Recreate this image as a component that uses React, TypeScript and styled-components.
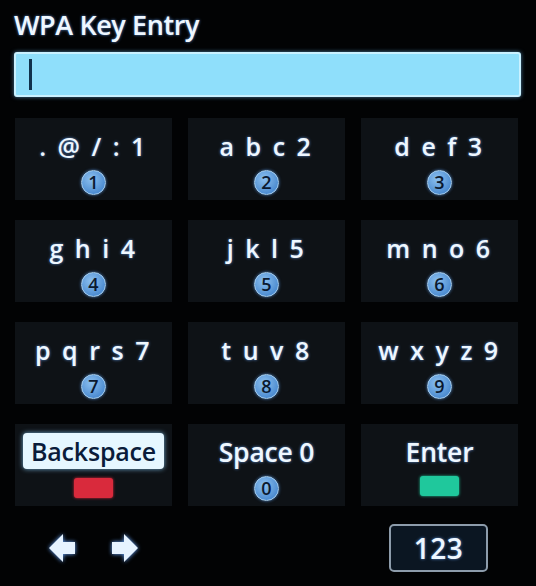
import React from "react";
import styled, { createGlobalStyle } from "styled-components";

const GlobalStyle = createGlobalStyle`
  html, body {
    margin: 0;
    padding: 0;
    background: #000;
  }
  body {
    font-family: "Open Sans", "DejaVu Sans", sans-serif;
  }
`;

const Screen = styled.div`
  width: 536px;
  height: 586px;
  box-sizing: border-box;
  padding: 8px 15px 0 14px;
  background: #020304;
  color: #eef7ff;
  overflow: hidden;
`;

const Title = styled.div`
  font-size: 27px;
  font-weight: 600;
  line-height: 33px;
  letter-spacing: -0.4px;
  text-shadow: 0 0 3px rgba(110, 170, 255, 0.8);
`;

const InputBar = styled.div`
  margin-top: 11px;
  height: 45px;
  box-sizing: border-box;
  background: #8fdffb;
  border: 2px solid #c9f1ff;
  border-radius: 3px;
  box-shadow: 0 0 4px rgba(120, 200, 255, 0.6);
  display: flex;
  align-items: center;
  padding-left: 13px;
`;

const Caret = styled.div`
  width: 3px;
  height: 31px;
  background: #10324c;
`;

const Keypad = styled.div`
  margin-top: 21px;
  margin-left: 1px;
  display: grid;
  grid-template-columns: repeat(3, 157px);
  grid-auto-rows: 82px;
  column-gap: 16px;
  row-gap: 20px;
`;

const Key = styled.div`
  background: #0e1216;
  display: flex;
  flex-direction: column;
  align-items: center;
  padding-top: 13px;
  box-sizing: border-box;
`;

const Label = styled.div<{ $word?: boolean; $selected?: boolean }>`
  font-size: ${(p) => (p.$word && !p.$selected ? "26.5px" : "25px")};
  font-weight: 600;
  line-height: 30px;
  letter-spacing: ${(p) => (p.$word ? "-0.2px" : "2.5px")};
  white-space: pre;
  color: ${(p) => (p.$selected ? "#0a1c3a" : "#eef7ff")};
  background: ${(p) => (p.$selected ? "#e6f7ff" : "transparent")};
  border-radius: ${(p) => (p.$selected ? "4px" : "0")};
  padding: ${(p) => (p.$selected ? "3px 8px" : "0")};
  margin-top: ${(p) => (p.$selected ? "-4px" : "0")};
  box-shadow: ${(p) => (p.$selected ? "0 0 5px rgba(140, 210, 255, 0.8)" : "none")};
  text-shadow: ${(p) => (p.$selected ? "none" : "0 0 3px rgba(110, 170, 255, 0.8)")};
`;

const Badge = styled.div`
  margin-top: 9px;
  width: 25px;
  height: 25px;
  border-radius: 50%;
  box-sizing: border-box;
  background: radial-gradient(circle at 40% 35%, #8cc0ef 0%, #4f8ed2 70%, #3f7cc0 100%);
  border: 1.5px solid #a9d2f4;
  color: #0b1a30;
  font-size: 18px;
  font-weight: 600;
  line-height: 22px;
  text-align: center;
  box-shadow: 0 0 3px rgba(100, 170, 255, 0.7);
`;

const ColorKey = styled.div<{ $color: string }>`
  margin-top: 9px;
  width: 39px;
  height: 20px;
  border-radius: 3px;
  background: ${(p) => p.$color};
  box-shadow: 0 0 3px ${(p) => p.$color};
`;

const Footer = styled.div`
  margin-top: 18px;
  display: flex;
  justify-content: space-between;
  align-items: center;
`;

const Arrows = styled.div`
  display: flex;
  gap: 35px;
  padding-left: 34px;
`;

const ModeButton = styled.div`
  margin-right: 33px;
  width: 99px;
  height: 48px;
  box-sizing: border-box;
  border: 2px solid #8d9cab;
  border-radius: 5px;
  background: #0b1622;
  display: flex;
  align-items: center;
  justify-content: center;
  font-size: 28px;
  font-weight: 600;
  letter-spacing: 0.5px;
  text-shadow: 0 0 3px rgba(110, 170, 255, 0.8);
`;

const Arrow = ({ dir }: { dir: "left" | "right" }) => (
  <svg
    width="28"
    height="30"
    viewBox="0 0 28 30"
    style={{ transform: dir === "right" ? "scaleX(-1)" : undefined, filter: "drop-shadow(0 0 2px #6aa8ff)" }}
  >
    <path d="M1 15 L15 1 L15 9 L27 9 L27 21 L15 21 L15 29 Z" fill="#e6f3ff" />
  </svg>
);

type KeyDef = { label: string; badge?: string; color?: string; selected?: boolean; word?: boolean };

const keys: KeyDef[] = [
  { label: ". @ / : 1", badge: "1" },
  { label: "a b c 2", badge: "2" },
  { label: "d e f 3", badge: "3" },
  { label: "g h i 4", badge: "4" },
  { label: "j k l 5", badge: "5" },
  { label: "m n o 6", badge: "6" },
  { label: "p q r s 7", badge: "7" },
  { label: "t u v 8", badge: "8" },
  { label: "w x y z 9", badge: "9" },
  { label: "Backspace", color: "#d92a3c", selected: true, word: true },
  { label: "Space 0", badge: "0", word: true },
  { label: "Enter", color: "#1fc89c", word: true },
];

export default function App() {
  return (
    <Screen>
      <GlobalStyle />
      <Title>WPA Key Entry</Title>
      <InputBar>
        <Caret />
      </InputBar>
      <Keypad>
        {keys.map((k) => (
          <Key key={k.label}>
            <Label $selected={k.selected} $word={k.word}>
              {k.label}
            </Label>
            {k.badge && <Badge>{k.badge}</Badge>}
            {k.color && <ColorKey $color={k.color} />}
          </Key>
        ))}
      </Keypad>
      <Footer>
        <Arrows>
          <Arrow dir="left" />
          <Arrow dir="right" />
        </Arrows>
        <ModeButton>123</ModeButton>
      </Footer>
    </Screen>
  );
}
